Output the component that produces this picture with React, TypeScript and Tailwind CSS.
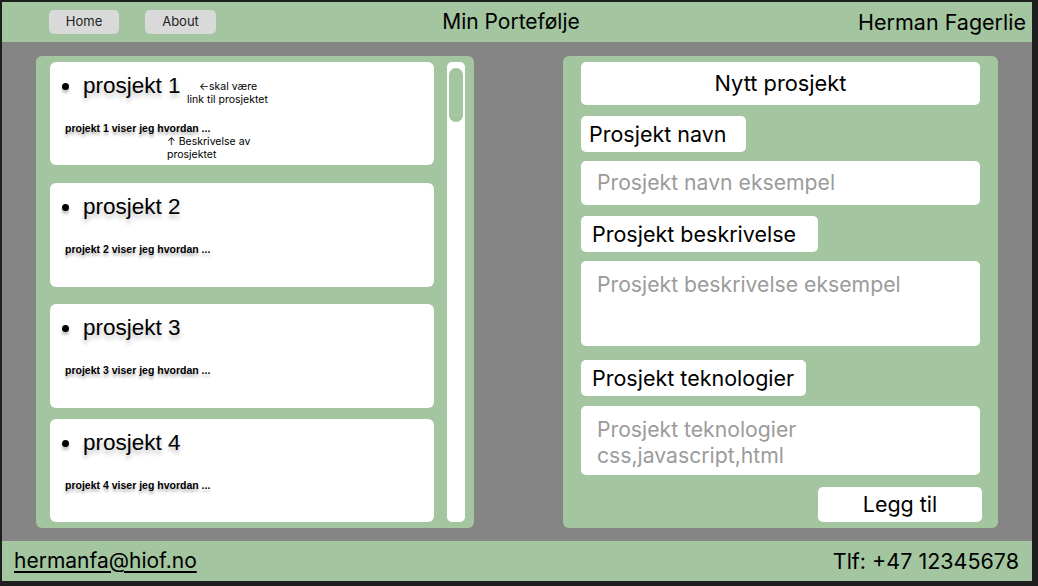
import React from "react";

const green = "bg-[#a3c59f]";

const projects = [
  { n: 1, mt: "mt-0", h: "h-[103px]" },
  { n: 2, mt: "mt-[18px]", h: "h-[104px]" },
  { n: 3, mt: "mt-[17px]", h: "h-[104px]" },
  { n: 4, mt: "mt-[11px]", h: "h-[103px]" },
];

const ProjectCard = ({ n, mt, h, notes }: { n: number; mt: string; h: string; notes?: boolean }) => (
  <div className={`${mt} ${h} relative rounded-[6px] bg-white`}>
    <div className="flex items-center pt-[11px] pl-[12px]">
      <span className="h-[7px] w-[7px] rounded-full bg-black [box-shadow:0_3px_3px_rgba(0,0,0,0.25)]" />
      <span className="ml-[14px] font-['Liberation_Sans',Arial,sans-serif] text-[22.5px] leading-[26px] text-black [text-shadow:0_4px_4px_rgba(0,0,0,0.25)]">
        prosjekt {n}
      </span>
    </div>
    <div className="mt-[22px] pl-[15px] font-['Liberation_Sans',Arial,sans-serif] text-[10.5px] font-bold leading-[14px] text-black [text-shadow:0_3px_3px_rgba(0,0,0,0.3)]">
      projekt {n} viser jeg hvordan ...
    </div>
    {notes && (
      <>
        <div className="absolute left-[137px] top-[18px] font-['Inter',sans-serif] text-[10.5px] leading-[13px] text-black">
          <div className="pl-[12px]">←skal være</div>
          <div>link til prosjektet</div>
        </div>
        <div className="absolute left-[117px] top-[73px] font-['Inter',sans-serif] text-[10.5px] leading-[13px] text-black">
          <div>↑ Beskrivelse av</div>
          <div>prosjektet</div>
        </div>
      </>
    )}
  </div>
);

const Label = ({ text, w, pl }: { text: string; w: string; pl: string }) => (
  <div className={`${w} ${pl} flex h-[36px] items-center rounded-[5px] bg-white text-[21.5px] text-black`}>
    {text}
  </div>
);

export default function App() {
  return (
    <div className="h-[586px] w-[1038px] overflow-hidden bg-[#1e1e1e] pt-[2px] pl-[2px] pr-[6px] pb-[5px] font-['Inter',sans-serif]">
      <div className="flex h-full flex-col">
        {/* header */}
        <header className={`${green} grid h-[40px] grid-cols-3 items-center`}>
          <div className="flex items-center pl-[47px]">
            <button className="h-[24px] w-[70px] rounded-[5px] bg-[#d9d9d9] text-[13px] text-[#222]">Home</button>
            <button className="ml-[26px] h-[24px] w-[71px] rounded-[5px] bg-[#d9d9d9] text-[13px] text-[#222]">About</button>
          </div>
          <div className="pr-[12px] text-center text-[21px] text-black">Min Portefølje</div>
          <div className="pr-[6px] text-right text-[21.5px] text-black">Herman Fagerlie</div>
        </header>

        {/* main */}
        <main className="flex flex-1 bg-[#858585] pt-[14px] pl-[34px]">
          <section className={`${green} flex h-[472px] w-[438px] gap-[13px] rounded-[6px] py-[6px] pl-[14px] pr-[9px]`}>
            <div className="flex w-[384px] flex-col">
              {projects.map((p) => (
                <ProjectCard key={p.n} {...p} notes={p.n === 1} />
              ))}
            </div>
            <div className="w-[18px] rounded-[5px] bg-white pt-[6px] pl-[2px]">
              <div className={`${green} h-[54px] w-[14px] rounded-[7px]`} />
            </div>
          </section>

          <section className={`${green} ml-[89px] flex h-[472px] w-[435px] flex-col rounded-[6px] px-[18px] pt-[6px]`}>
            <div className="flex h-[43px] items-center justify-center rounded-[5px] bg-white text-[21.8px] text-black">
              Nytt prosjekt
            </div>
            <div className="mt-[11px]">
              <Label text="Prosjekt navn" w="w-[165px]" pl="pl-[8px]" />
            </div>
            <div className="mt-[9px] flex h-[44px] items-center rounded-[5px] bg-white pl-[16px] text-[21.2px] text-[#9b9b9b]">
              Prosjekt navn eksempel
            </div>
            <div className="mt-[11px]">
              <Label text="Prosjekt beskrivelse" w="w-[237px]" pl="pl-[11px]" />
            </div>
            <div className="mt-[9px] h-[85px] rounded-[5px] bg-white pl-[16px] pt-[10px] text-[21.2px] leading-[26px] text-[#9b9b9b]">
              Prosjekt beskrivelse eksempel
            </div>
            <div className="mt-[14px]">
              <Label text="Prosjekt teknologier" w="w-[225px]" pl="pl-[11px]" />
            </div>
            <div className="mt-[10px] h-[69px] rounded-[5px] bg-white pl-[16px] pt-[10px] text-[21.2px] leading-[26px] text-[#9b9b9b]">
              <div>Prosjekt teknologier</div>
              <div>css,javascript,html</div>
            </div>
            <button className="mt-[12px] mr-[-2px] flex h-[35px] w-[164px] items-center justify-center self-end rounded-[5px] bg-white text-[21.5px] text-black">
              Legg til
            </button>
          </section>
        </main>

        {/* footer */}
        <footer className={`${green} flex h-[40px] items-center justify-between pl-[12px] pr-[13px] text-black`}>
          <a href="#" className="text-[21px] underline underline-offset-[3px]">hermanfa@hiof.no</a>
          <span className="text-[21.5px]">Tlf: +47 12345678</span>
        </footer>
      </div>
    </div>
  );
}
